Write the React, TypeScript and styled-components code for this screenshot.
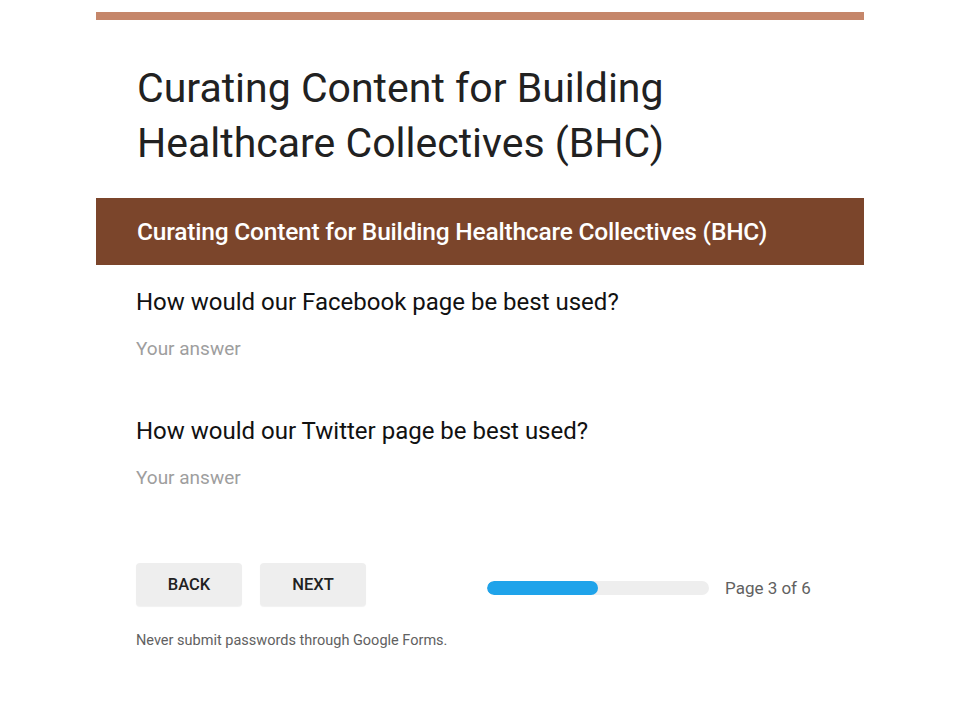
import React from "react";
import styled, { createGlobalStyle } from "styled-components";

const Global = createGlobalStyle`
  html, body { margin: 0; padding: 0; background: #ffffff; }
  body { font-family: Roboto, "Noto Sans", Arial, sans-serif; }
`;

const Page = styled.div`
  width: 768px;
  margin: 0 auto;
  padding-top: 12px;
  box-sizing: border-box;
`;

const TopBar = styled.div`
  height: 8px;
  background: #c5866a;
`;

const Title = styled.h1`
  margin: 0;
  padding: 41px 40px 27px 41px;
  font-size: 41px;
  line-height: 55px;
  font-weight: 400;
  color: #212121;
`;

const SectionBand = styled.div`
  height: 67px;
  background: #7b452b;
  display: flex;
  align-items: center;
  padding: 0 41px;
`;

const SectionTitle = styled.h2`
  margin: 0;
  font-size: 24.5px;
  font-weight: 500;
  color: #ffffff;
  letter-spacing: -0.2px;
`;

const Body = styled.div`
  display: flex;
  flex-direction: column;
  padding: 22px 40px 0 40px;
`;

const Question = styled.div`
  display: flex;
  flex-direction: column;
  margin-bottom: 55px;
`;

const QuestionLabel = styled.div`
  font-size: 24px;
  line-height: 30px;
  color: #111111;
`;

const AnswerHint = styled.div`
  margin-top: 20px;
  font-size: 19px;
  line-height: 24px;
  color: #9e9e9e;
`;

const Footer = styled.div`
  display: flex;
  align-items: center;
  margin-top: 18px;
`;

const Button = styled.button`
  width: 106px;
  height: 43px;
  border: none;
  border-radius: 4px;
  background: #eeeeee;
  color: #212121;
  font-family: Roboto, Arial, sans-serif;
  font-size: 16.5px;
  font-weight: 500;
  box-shadow: 0 1px 1px rgba(0, 0, 0, 0.06);
  margin-right: 18px;
  padding: 0;
`;

const Progress = styled.div`
  display: flex;
  align-items: center;
  margin-left: 103px;
  margin-top: 6px;
`;

const Track = styled.div`
  width: 222px;
  height: 14px;
  border-radius: 7px;
  background: #eeeeee;
  overflow: hidden;
`;

const Fill = styled.div`
  height: 100%;
  border-radius: 7px;
  background: #1fa3ea;
`;

const PageLabel = styled.span`
  margin-left: 16px;
  font-size: 17px;
  color: #616161;
`;

const Notice = styled.div`
  margin-top: 26px;
  font-size: 14.5px;
  line-height: 17px;
  color: #616161;
`;

export default function App() {
  return (
    <>
      <Global />
      <Page>
        <TopBar />
        <Title>
          Curating Content for Building
          <br />
          Healthcare Collectives (BHC)
        </Title>
        <SectionBand>
          <SectionTitle>Curating Content for Building Healthcare Collectives (BHC)</SectionTitle>
        </SectionBand>
        <Body>
          <Question>
            <QuestionLabel>How would our Facebook page be best used?</QuestionLabel>
            <AnswerHint>Your answer</AnswerHint>
          </Question>
          <Question>
            <QuestionLabel>How would our Twitter page be best used?</QuestionLabel>
            <AnswerHint>Your answer</AnswerHint>
          </Question>
          <Footer>
            <Button>BACK</Button>
            <Button>NEXT</Button>
            <Progress>
              <Track>
                <Fill style={{ width: `${(111 / 222) * 100}%` }} />
              </Track>
              <PageLabel>Page 3 of 6</PageLabel>
            </Progress>
          </Footer>
          <Notice>Never submit passwords through Google Forms.</Notice>
        </Body>
      </Page>
    </>
  );
}
